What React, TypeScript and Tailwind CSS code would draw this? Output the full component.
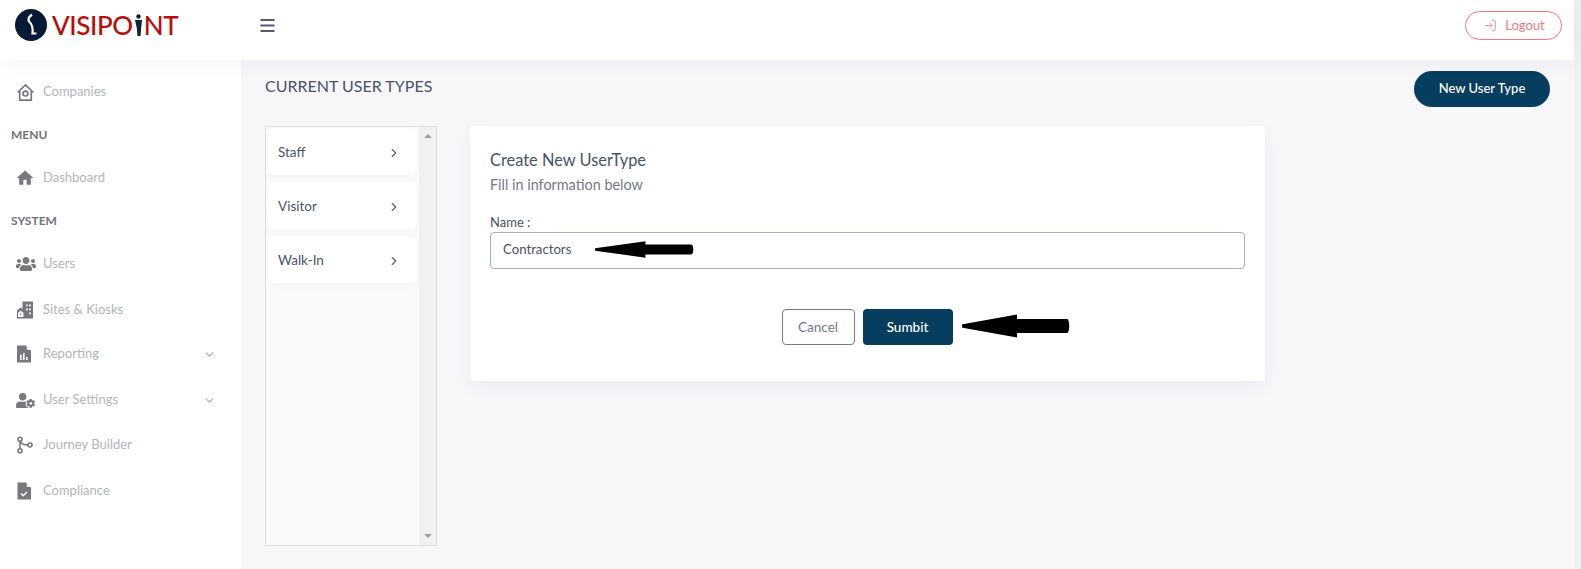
import React from 'react';
import { ChevronDown, ChevronRight, LogIn, Menu } from 'lucide-react';
import { FaUsers, FaUserCog } from 'react-icons/fa';
import { MdHome } from 'react-icons/md';

function CompaniesIcon() {
  return (
    <svg width="19" height="19" viewBox="0 0 18 18" fill="none" stroke="#77777d" strokeWidth="1.6">
      <path d="M1.5 9 9 1.8 16.5 9" strokeLinejoin="round" />
      <path d="M3.5 7.5V16.2h11V7.5" />
      <circle cx="9" cy="10" r="2.3" />
    </svg>
  );
}

function SitesIcon() {
  return (
    <svg width="18" height="18" viewBox="0 0 18 18" fill="#77777d">
      <path d="M6.5 0.5H17V17.5H1V9.5l3.5-3 2 1.5z" />
      <g fill="#fff">
        <rect x="10" y="3.5" width="1.8" height="1.8" />
        <rect x="13" y="3.5" width="1.8" height="1.8" />
        <rect x="10" y="7.5" width="1.8" height="1.8" />
        <rect x="13" y="7.5" width="1.8" height="1.8" />
        <rect x="13" y="11.5" width="1.8" height="1.8" />
        <path d="M4.5 9.5 7.5 12V16H2V12z" />
      </g>
      <rect x="3.8" y="12.5" width="1.5" height="1.5" />
    </svg>
  );
}

function ReportingIcon() {
  return (
    <svg width="16" height="18" viewBox="0 0 16 18" fill="#77777d">
      <path d="M1 0.5h9l5 5v12H1z" />
      <path d="M10.8 0.5 15 4.7h-4.2z" fill="#fff" />
      <g fill="#fff">
        <rect x="4" y="9.5" width="1.6" height="5.5" />
        <rect x="7" y="8" width="1.6" height="7" />
        <rect x="10" y="12" width="1.6" height="3" />
      </g>
    </svg>
  );
}

function JourneyIcon() {
  return (
    <svg width="18" height="18" viewBox="0 0 18 18" fill="none" stroke="#77777d" strokeWidth="1.6">
      <circle cx="4" cy="3.2" r="2" />
      <circle cx="4" cy="14.8" r="2" />
      <circle cx="14" cy="9" r="2" />
      <path d="M4 5.2v7.6M4.5 5.2C5 8 8 9 12 9" />
    </svg>
  );
}

function ComplianceIcon() {
  return (
    <svg width="16" height="18" viewBox="0 0 16 18" fill="#77777d">
      <path d="M1.5 0.5H10l5 5v12H1.5z" />
      <path d="M10.8 0.5 15 4.7h-4.2z" fill="#fff" />
      <path d="M5 11.5 7.2 13.7 11 10" fill="none" stroke="#fff" strokeWidth="1.5" />
    </svg>
  );
}

function NavItem({ icon, label, chevron, className }: { icon: React.ReactNode; label: string; chevron?: boolean; className: string }) {
  return (
    <div className={`flex items-center pl-[16px] pr-[25px] text-[13px] text-[#b4b4b9] ${className}`}>
      <span className="flex w-[27px] shrink-0 items-center">{icon}</span>
      <span>{label}</span>
      {chevron && <ChevronDown size={13} className="ml-auto text-[#a8a8ad]" />}
    </div>
  );
}

function UserTypeRow({ label }: { label: string }) {
  return (
    <div className="flex h-[47px] items-center justify-between rounded-md bg-white pl-[10px] pr-[16px] pt-[2px] text-[13.5px] text-[#4a5468] shadow-[0_2px_8px_rgba(0,0,0,0.03)]">
      <span>{label}</span>
      <ChevronRight size={14} className="text-[#555f70]" />
    </div>
  );
}

function Arrow({ className }: { className: string }) {
  return (
    <svg className={className} viewBox="0 0 108 24" fill="#000" preserveAspectRatio="none">
      <path d="M0 10.5 2 10 55 0.5V5L105 5C108 5 108 19 105 19L55 19V23.5L2 14 0 13.5Z" />
    </svg>
  );
}

export default function App() {
  return (
    <div className="flex h-[569px] w-full overflow-hidden bg-[#f1f1f4] font-['Lato',sans-serif]">
      <div className="flex min-w-0 flex-1 flex-col">
        {/* Top bar */}
        <header className="relative z-10 flex h-[60px] shrink-0 items-center bg-white pb-[10px] shadow-[0_0_22px_rgba(40,40,70,0.07)]">
          <div className="flex w-[258px] shrink-0 items-center pl-[15px]">
            <svg width="32" height="32" viewBox="0 0 32 32" className="shrink-0">
              <circle cx="16" cy="16" r="16" fill="#061a36" />
              <path d="M17 5.5C13.5 8 12.5 11 14.5 13C17.5 15.5 18 19 17.5 24.5H21.5" fill="none" stroke="#fff" strokeWidth="2.2" />
            </svg>
            <span className="ml-[5px] flex items-center text-[26px] leading-none font-medium tracking-[-0.4px] text-[#b80c09]">
              VISIPO
              <svg width="9" height="22" viewBox="0 0 9 22" className="mx-[1px]" fill="#0e2238">
                <circle cx="4.5" cy="2.5" r="2.2" />
                <path d="M1 6h7l-.8 8-.7 8h-3l-.7-8z" />
              </svg>
              NT
            </span>
          </div>
          <Menu size={19} strokeWidth={2.5} className="text-[#555b73]" />
          <div className="ml-auto mr-[12px] flex h-[29px] w-[97px] items-center justify-center gap-[8px] rounded-full border border-[#f27b7b] pl-[2px] text-[13px] text-[#f27b7b]">
            <LogIn size={13} strokeWidth={1.5} />
            <span className="pt-[1px]">Logout</span>
          </div>
        </header>

        <div className="flex min-h-0 flex-1">
          {/* Sidebar */}
          <aside className="w-[241px] shrink-0 bg-white">
            <NavItem className="mt-[23px] h-[18px]" icon={<CompaniesIcon />} label="Companies" />
            <div className="mt-[25px] pl-[11px] text-[12px] leading-[18px] font-bold text-[#71717a]">MENU</div>
            <NavItem className="mt-[25px] h-[18px]" icon={<MdHome size={20} color="#77777d" className="-ml-[1px]" />} label="Dashboard" />
            <div className="mt-[25px] pl-[11px] text-[12px] leading-[18px] font-bold text-[#71717a]">SYSTEM</div>
            <NavItem className="mt-[25px] h-[18px]" icon={<FaUsers size={20} color="#77777d" />} label="Users" />
            <NavItem className="mt-[28px] h-[18px]" icon={<SitesIcon />} label="Sites &amp; Kiosks" />
            <NavItem className="mt-[26px] h-[18px]" icon={<ReportingIcon />} label="Reporting" chevron />
            <NavItem className="mt-[28px] h-[18px]" icon={<FaUserCog size={19} color="#77777d" />} label="User Settings" chevron />
            <NavItem className="mt-[27px] h-[18px]" icon={<JourneyIcon />} label="Journey Builder" />
            <NavItem className="mt-[28px] h-[18px]" icon={<ComplianceIcon />} label="Compliance" />
          </aside>

          {/* Main */}
          <main className="relative min-w-0 flex-1 bg-[#f7f7fa] pl-[24px] pr-[24px]">
            <div className="flex items-start justify-between pt-[11px]">
              <h1 className="mt-[5px] text-[16px] leading-[20px] font-normal text-[#495267]">CURRENT USER TYPES</h1>
              <button className="h-[36px] w-[136px] rounded-full bg-[#073e5f] text-[13px] font-medium text-white">New User Type</button>
            </div>
            <div className="mt-[19px] flex items-start gap-[33px]">
              {/* Type list */}
              <div className="flex h-[420px] w-[172px] shrink-0 border border-[#dfdfe2] bg-[#fafafa]">
                <div className="flex flex-1 flex-col gap-[7px] pl-[2px] pt-[1px] pr-[2px]">
                  <UserTypeRow label="Staff" />
                  <UserTypeRow label="Visitor" />
                  <UserTypeRow label="Walk-In" />
                </div>
                <div className="flex w-[17px] shrink-0 flex-col items-center justify-between bg-[#f1f1f1] py-[7px]">
                  <span className="h-0 w-0 border-x-[4px] border-b-[4px] border-x-transparent border-b-[#a3a3a3]" />
                  <span className="h-0 w-0 border-x-[4px] border-t-[4px] border-x-transparent border-t-[#a3a3a3]" />
                </div>
              </div>

              {/* Form card */}
              <div className="relative h-[255px] w-[795px] shrink-0 rounded-[4px] bg-white px-[20px] pt-[24px] shadow-[0_6px_18px_rgba(60,60,90,0.06)]">
                <h2 className="text-[16.4px] leading-[20px] font-normal text-[#495267]">Create New UserType</h2>
                <p className="mt-[5px] text-[14.4px] leading-[20px] text-[#74788d]">Fill in information below</p>
                <label className="mt-[19px] block text-[13px] leading-[16px] text-[#495267]">Name :</label>
                <div className="relative mt-[2px] flex h-[37px] items-center rounded-[4px] border border-[#a6b0bf] pb-[2px] pl-[12px] text-[13.2px] text-[#495267]">
                  Contractors
                  <Arrow className="absolute left-[104px] top-[8px] h-[17px] w-[99px]" />
                </div>
                <div className="relative mt-[40px] flex justify-center gap-[8px] pr-px">
                  <button className="h-[36px] w-[73px] rounded-[4px] border border-[#74788d] text-[13.5px] text-[#74788d]">Cancel</button>
                  <button className="h-[36px] w-[90px] rounded-[4px] bg-[#073e5f] text-[13.5px] font-medium text-white">Sumbit</button>
                  <Arrow className="absolute left-[472px] top-[5px] h-[24px] w-[108px]" />
                </div>
              </div>
            </div>
          </main>
        </div>
      </div>
      {/* Page scrollbar gutter */}
      <div className="w-[7px] shrink-0 bg-[#f1f1f1]" />
    </div>
  );
}
